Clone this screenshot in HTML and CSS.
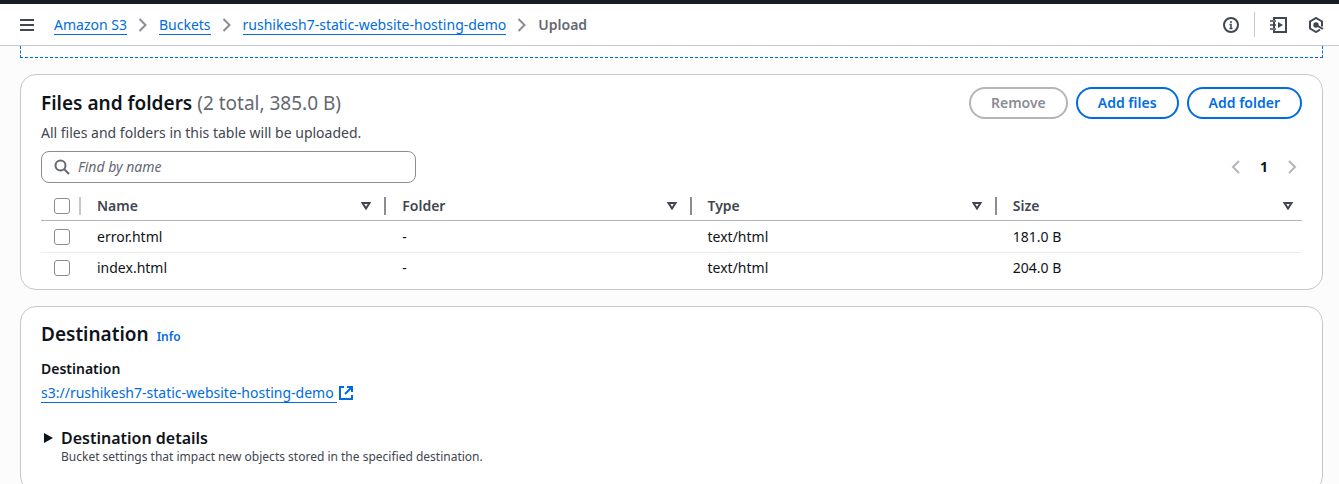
FILE: index.html
```html
<!DOCTYPE html>
<html lang="en">
<head>
<meta charset="utf-8">
<title>Upload - Amazon S3</title>
<link rel="stylesheet" href="styles.css">
</head>
<body>
<header class="topbar">
  <button class="icon-button" aria-label="Open menu"><svg width="16" height="16" viewBox="0 0 16 16" fill="none" stroke="currentColor" stroke-width="2"><path d="M1 3h14M1 8h14M1 13h14"/></svg></button>
  <nav class="breadcrumbs" aria-label="Breadcrumbs">
    <a class="link" href="#">Amazon S3</a>
    <svg class="crumb-arrow" width="16" height="16" viewBox="0 0 16 16"><path d="m4.500 2 6 6-6 6"/></svg>
    <a class="link" href="#">Buckets</a>
    <svg class="crumb-arrow" width="16" height="16" viewBox="0 0 16 16"><path d="m4.500 2 6 6-6 6"/></svg>
    <a class="link" href="#">rushikesh7-static-website-hosting-demo</a>
    <svg class="crumb-arrow" width="16" height="16" viewBox="0 0 16 16"><path d="m4.500 2 6 6-6 6"/></svg>
    <span class="current">Upload</span>
  </nav>
  <div class="tools">
    <button class="icon-button" aria-label="Information"><svg width="16" height="16" viewBox="0 0 16 16" fill="none" stroke="currentColor" stroke-width="2"><circle cx="8" cy="8" r="7"/><path d="M8 12V7.500H6.500M6.500 11.500h3M8 4v2" stroke-width="1.500"/></svg></button>
    <span class="divider"></span>
    <button class="icon-button" aria-label="Tutorials"><svg width="18" height="16" viewBox="0 0 18 16" fill="none" stroke="currentColor" stroke-width="2"><path d="M4 3V1h12v14H4v-2M4 5v6"/><path d="M0 4h6M0 8h6M0 12h6" stroke-width="1.600"/><path d="M8 5v6l5-3z" fill="currentColor" stroke="none"/></svg></button>
    <button class="icon-button" aria-label="Diagnostics"><svg width="16" height="16" viewBox="0 0 16 16" fill="none" stroke="currentColor" stroke-width="2"><path d="M14 9.500v-5L8 1 2 4.500v7L8 15l4-2.300"/><circle cx="8" cy="8" r="2.700" fill="currentColor" stroke="none"/><path d="m8 8 7 4"/></svg></button>
  </div>
</header>
<main class="content">
  <div class="dropzone"></div>
  <section class="card">
    <div class="card-header">
      <h2 class="title">Files and folders <span class="count">(2 total, 385.0 B)</span></h2>
      <div class="actions">
        <button class="button" disabled>Remove</button>
        <button class="button">Add files</button>
        <button class="button">Add folder</button>
      </div>
    </div>
    <p class="description">All files and folders in this table will be uploaded.</p>
    <div class="filters">
      <label class="search">
        <svg width="16" height="16" viewBox="0 0 16 16" fill="none" stroke="currentColor" stroke-width="2"><circle cx="6.500" cy="6.500" r="5"/><path d="m10 10 5 5"/></svg>
        <input type="text" placeholder="Find by name" aria-label="Find by name">
      </label>
      <div class="pagination">
        <button class="icon-button" disabled aria-label="Previous page"><svg width="16" height="16" viewBox="0 0 16 16" fill="none" stroke="currentColor" stroke-width="2"><path d="M11 2 5 8l6 6"/></svg></button>
        <button class="page">1</button>
        <button class="icon-button" disabled aria-label="Next page"><svg width="16" height="16" viewBox="0 0 16 16" fill="none" stroke="currentColor" stroke-width="2"><path d="m5 2 6 6-6 6"/></svg></button>
      </div>
    </div>
    <table class="files">
      <thead>
        <tr>
          <th class="select"><div class="head"><input type="checkbox" aria-label="Select all"></div></th>
          <th><div class="head"><span>Name</span><svg class="sort" width="10" height="8" viewBox="0 0 10 8"><path d="M1.500 1h7L5 6.500z"/></svg></div></th>
          <th><div class="head"><span>Folder</span><svg class="sort" width="10" height="8" viewBox="0 0 10 8"><path d="M1.500 1h7L5 6.500z"/></svg></div></th>
          <th><div class="head"><span>Type</span><svg class="sort" width="10" height="8" viewBox="0 0 10 8"><path d="M1.500 1h7L5 6.500z"/></svg></div></th>
          <th><div class="head"><span>Size</span><svg class="sort" width="10" height="8" viewBox="0 0 10 8"><path d="M1.500 1h7L5 6.500z"/></svg></div></th>
        </tr>
      </thead>
      <tbody>
        <tr><td class="select"><input type="checkbox" aria-label="Select error.html"></td><td>error.html</td><td>-</td><td>text/html</td><td>181.0 B</td></tr>
        <tr><td class="select"><input type="checkbox" aria-label="Select index.html"></td><td>index.html</td><td>-</td><td>text/html</td><td>204.0 B</td></tr>
      </tbody>
    </table>
  </section>
  <section class="card">
    <div class="card-header destination-header">
      <h2 class="title">Destination</h2>
      <a class="info" href="#">Info</a>
    </div>
    <h3 class="label">Destination</h3>
    <p class="destination"><a class="link external" href="#">s3://rushikesh7-static-website-hosting-demo</a><svg class="external-icon" width="16" height="16" viewBox="0 0 16 16" fill="none" stroke="currentColor" stroke-width="2"><path d="M6 2H2v12h12v-4M9 2h5v5M14 2 7 9"/></svg></p>
    <details class="details">
      <summary>
        <svg width="16" height="16" viewBox="0 0 16 16"><path d="M3 3v10l9-5z" fill="currentColor"/></svg>
        <span class="details-text"><span class="details-title">Destination details</span><span class="details-note">Bucket settings that impact new objects stored in the specified destination.</span></span>
      </summary>
    </details>
  </section>
</main>
</body>
</html>
```
FILE: styles.css
```css
* { box-sizing: border-box; }
body {
  margin: 0;
  height: 100vh;
  display: flex;
  flex-direction: column;
  background: #fcfcfd;
  color: #0f141a;
  font: 14px/20px "Noto Sans", "Open Sans", sans-serif;
}
h2, h3, p { margin: 0; }
button, input { font: inherit; }
svg { flex: none; }
.topbar {
  flex: none;
  display: flex;
  align-items: center;
  height: 46px;
  padding: 0 15px 0 19px;
  background: #fff;
  border-top: 4px solid #161d26;
  border-bottom: 1px solid #c6c6cd;
}
.icon-button {
  display: flex;
  padding: 0;
  border: 0;
  background: none;
  color: #424650;
}
.icon-button:disabled { color: #b4b4bb; }
.breadcrumbs {
  display: flex;
  align-items: center;
  gap: 8px;
  margin-left: 19px;
}
.link {
  color: #006ce0;
  text-decoration: none;
  border-bottom: 1px solid;
  line-height: 19px;
}
.crumb-arrow { fill: none; stroke: #8c8c94; stroke-width: 2; }
.current { color: #656871; font-weight: 600; }
.tools {
  display: flex;
  align-items: center;
  gap: 15px;
  margin-left: auto;
}
.tools .icon-button:last-child { margin-left: 5px; }
.divider { width: 1px; height: 25px; background: #c6c6cd; }
.content {
  flex: 1;
  min-height: 0;
  overflow-y: auto;
  scrollbar-width: none;
  padding: 0 16px 0 20px;
}
.dropzone {
  height: 12px;
  background: #fff;
  border: 1px dashed #006ce0;
  border-top: 0;
}
.card {
  margin-top: 16px;
  padding: 12px 20px 6px;
  background: #fff;
  border: 1px solid #c6c6cd;
  border-radius: 16px;
}
.card-header {
  display: flex;
  align-items: center;
  justify-content: space-between;
  min-height: 32px;
}
.title { font-size: 19px; line-height: 24px; font-weight: 600; }
.count { color: #656871; font-weight: 400; }
.actions { display: flex; gap: 8px; }
.button {
  height: 32px;
  padding: 0 20px;
  border: 2px solid #006ce0;
  border-radius: 16px;
  background: #fff;
  color: #006ce0;
  font-weight: 600;
  line-height: 20px;
}
.button:disabled { border-color: #b4b4bb; color: #8c8c94; }
.description { margin-top: 4px; color: #424650; }
.filters {
  display: flex;
  align-items: center;
  justify-content: space-between;
  margin-top: 8px;
}
.search {
  display: flex;
  align-items: center;
  gap: 8px;
  width: 375px;
  height: 32px;
  padding: 0 12px;
  border: 1px solid #8c8c94;
  border-radius: 8px;
  color: #656871;
}
.search input {
  flex: 1;
  min-width: 0;
  padding: 0;
  border: 0;
  outline: 0;
  background: none;
}
.search input::placeholder { color: #656871; font-style: italic; opacity: 1; }
.pagination { display: flex; align-items: center; gap: 12px; padding-right: 2px; }
.page {
  width: 16px;
  padding: 0;
  border: 0;
  background: none;
  color: #0f141a;
  font-weight: 700;
}
.files {
  width: 100%;
  margin-top: 8px;
  border-collapse: separate;
  border-spacing: 0;
  table-layout: fixed;
}
.files th {
  height: 30px;
  padding: 0;
  border-bottom: 1px solid #b4b4bb;
  color: #424650;
  font-weight: 600;
  text-align: left;
}
.files td { height: 30px; padding: 0 16px; }
.files tbody tr:first-child td { height: 32px; border-bottom: 1px solid #ebebf0; }
.files .select { width: 40px; padding-left: 13px; padding-right: 0; }
.files th.select .head { padding: 0; border-color: #c6c6cd; }
.head {
  display: flex;
  align-items: center;
  justify-content: space-between;
  height: 18px;
  padding: 0 13px 0 16px;
  border-right: 2px solid #8c8c94;
}
.files th:last-child .head { border-right: 0; padding-right: 9px; }
.sort { fill: none; stroke: #424650; stroke-width: 2; }
.files input {
  display: block;
  appearance: none;
  width: 16px;
  height: 16px;
  margin: 0;
  border: 1px solid #8c8c94;
  border-radius: 3px;
  background: #fff;
}
.destination-header { justify-content: flex-start; align-items: baseline; gap: 8px; padding-top: 3px; }
.info { color: #006ce0; font-size: 12px; font-weight: 600; text-decoration: none; }
.label { margin-top: 8px; font-size: 14px; line-height: 20px; font-weight: 600; }
.destination { display: flex; align-items: center; gap: 1px; margin-top: 4px; color: #006ce0; }
.external { padding-right: 3px; }
.details { margin-top: 24px; padding-bottom: 20px; }
.details summary { display: flex; gap: 4px; list-style: none; }
.details summary svg { margin-top: 3px; }
.details-text { display: flex; flex-direction: column; }
.details-title { font-size: 16px; line-height: 22px; font-weight: 600; }
.details-note { color: #424650; font-size: 12px; line-height: 16px; }
```
